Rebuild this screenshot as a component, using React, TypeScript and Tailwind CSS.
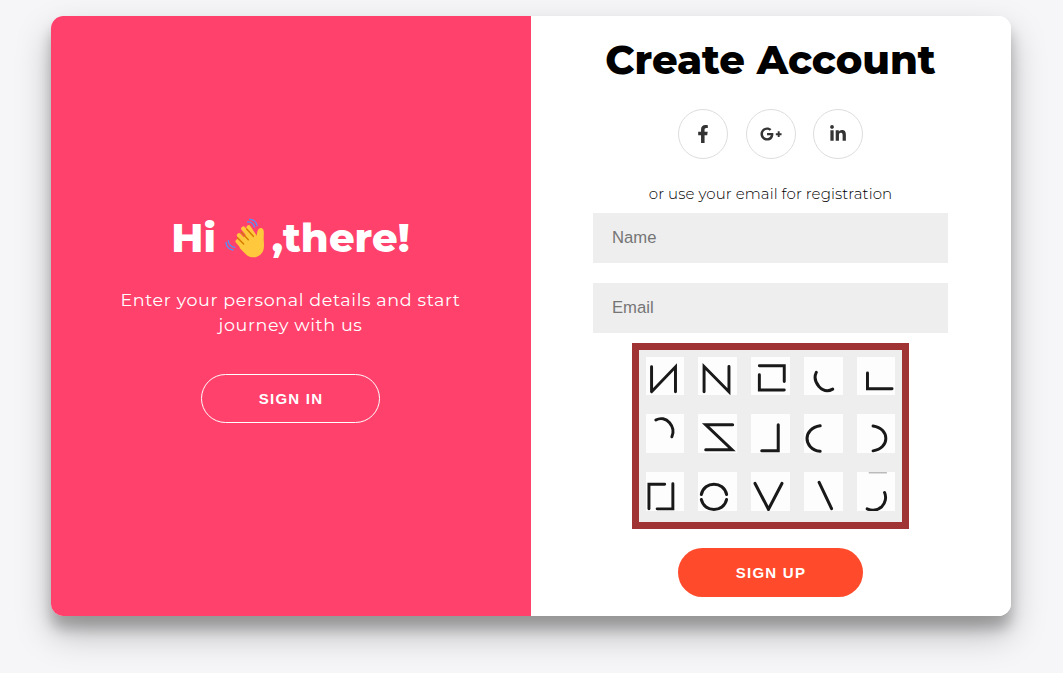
import { FaFacebookF, FaGooglePlusG, FaLinkedinIn } from "react-icons/fa";

const glyphs = [
  "M17 106V30M17 106L90 30V106",
  "M17 106V29L93 106V29",
  "M24 27H100V75M24 54V101H100",
  "M36 47C29 61 34 78 44 90C56 103 72 106 86 98",
  "M32 49V97H107",
  "M30 17C44 9 61 12 72 25C83 38 85 54 79 68",
  "M103 32H23L101 106H23",
  "M81 32V109H32",
  "M48 35C-4 42 -4 104 48 111",
  "M49 35C101 42 101 104 49 111",
  "M57 36H9V111M82 34V111H34",
  "M10 67C18 26 77 26 85 67M10 82C18 121 77 121 85 82",
  "M12 34L52 111L92 34",
  "M45 31L82 109",
  "M84 61C91 76 86 94 76 104C63 116 48 118 31 111",
];

function Wave() {
  return (
    <svg viewBox="0 0 150 150" className="-mt-[2px] mr-px -ml-[7px] h-[50px] w-[50px] shrink-0" fill="none" strokeLinecap="round">
      <path d="M50 88L74 116M54 70L88 106M67 50L98 88M83 46L104 78" stroke="#ffc83d" strokeWidth="13" />
      <path d="M58 85L82 62L107 79C108 68 107 49 119 48C132 48 128 66 128 82C130 105 130 118 118 128C105 139 88 138 76 128L56 108Z" fill="#ffc83d" />
      <path d="M50 78L68 96M61 61L82 83M77 51L97 73" stroke="#d67d00" strokeWidth="4.5" />
      <path d="M80 30C90 29 98 36 100 45M86 22C98 21 107 31 108 41M22 86C22 96 30 105 41 106M15 92C16 103 24 113 36 114" stroke="#5092ff" strokeWidth="4" />
    </svg>
  );
}

const social = [
  { Icon: FaFacebookF, size: 18 },
  { Icon: FaGooglePlusG, size: 22 },
  { Icon: FaLinkedinIn, size: 18 },
];

export default function App() {
  return (
    <main className="flex h-[673px] w-full items-start overflow-hidden bg-[#f6f5f7] pt-4 pl-[51px] font-['Montserrat','Inter',sans-serif]">
      <div className="flex h-[600px] w-[960px] shrink-0 overflow-hidden rounded-[12.5px] bg-white shadow-[0_17.5px_35px_rgba(0,0,0,0.25),0_12.5px_12.5px_rgba(0,0,0,0.22)]">
        <section className="flex w-1/2 flex-col items-center bg-[#ff416c] pt-[196px] pr-px text-center text-white">
          <h1 className="flex h-[52px] items-center whitespace-pre text-[40px] font-extrabold">
            <span>Hi </span><Wave /><span>,there!</span>
          </h1>
          <p className="mt-[23px] text-[17.5px] leading-[25px] tracking-[0.625px]">
            Enter your personal details and start<br />journey with us
          </p>
          <button className="mt-[37px] h-[49px] w-[179px] rounded-full border border-white pt-px pl-px font-['Liberation_Sans',sans-serif] text-[15px] font-bold tracking-[1.25px]">
            SIGN IN
          </button>
        </section>
        <section className="flex w-1/2 flex-col items-center bg-white pr-px">
          <h1 className="mt-[19px] h-[50px] whitespace-nowrap text-[40px] leading-[50px] font-extrabold text-black">Create Account</h1>
          <div className="mt-6 flex gap-[17.5px]">
            {social.map(({ Icon, size }, i) => (
              <a key={i} className="flex h-[50px] w-[50px] items-center justify-center rounded-full border border-[#ddd] text-[#333]">
                <Icon size={size} />
              </a>
            ))}
          </div>
          <p className="mt-[25px] h-5 whitespace-nowrap text-[15px] leading-5 font-light tracking-[0.09px] text-black">or use your email for registration</p>
          <input placeholder="Name" className="mt-[9px] h-[50px] w-[355px] shrink-0 bg-[#eee] px-[19px] font-['Liberation_Sans',sans-serif] text-[16.67px] placeholder:text-[#757575]" />
          <input placeholder="Email" className="mt-5 h-[50px] w-[355px] shrink-0 bg-[#eee] px-[19px] font-['Liberation_Sans',sans-serif] text-[16.67px] placeholder:text-[#757575]" />
          <div className="mt-[10px] grid h-[186px] w-[277px] shrink-0 grid-cols-[38px_39px_39px_39px_38px] grid-rows-[38px_39px_39px] gap-x-[14px] gap-y-[19px] border-[7px] border-[#a03333] bg-[#eee] p-[7px]">
            {glyphs.map((d, i) => (
              <svg key={i} viewBox="0 0 116 116" className="h-full w-full bg-[#fdfdfd]" fill="none" stroke="#191919" strokeWidth="9" strokeLinecap="round">
                <path d={d} />
                {i === 14 && <path d="M37 1H90" stroke="#999" strokeWidth="3" />}
              </svg>
            ))}
          </div>
          <button className="mt-[19px] h-[49px] w-[185px] shrink-0 rounded-full bg-[#ff4b2b] pt-px pl-px font-['Liberation_Sans',sans-serif] text-[15px] font-bold tracking-[1.25px] text-white">
            SIGN UP
          </button>
        </section>
      </div>
    </main>
  );
}
